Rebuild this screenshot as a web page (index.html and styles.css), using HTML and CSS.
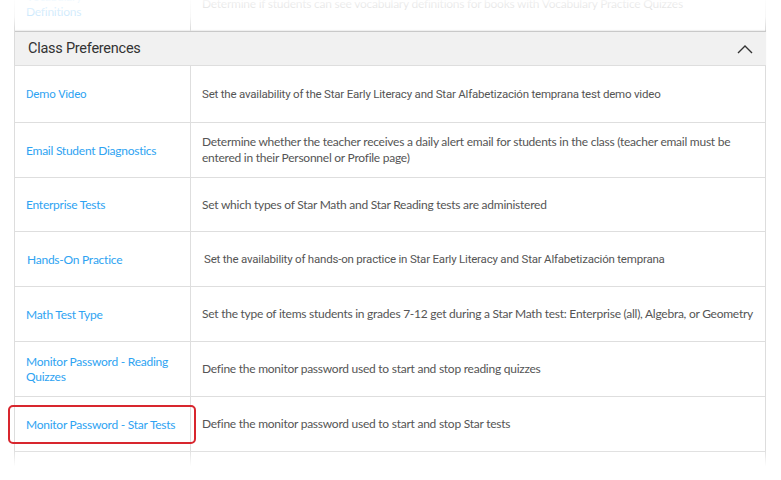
FILE: index.html
```
<!DOCTYPE html>
<html>
<head>
    <meta charset="UTF-8">
    <title>Class Preferences</title>
    <link rel="stylesheet" href="styles.css">
</head>
<body>
<div class="page">
    <div class="prefTable">
        <div class="row">
            <div class="name"><a href="#">Vocabulary<br>Definitions</a></div>
            <div class="desc">Determine if students can see vocabulary definitions for books with Vocabulary Practice Quizzes</div>
        </div>

        <div class="groupHead">
            <span>Class Preferences</span>
            <svg class="chev" width="16" height="10" viewBox="0 0 16 10"><polyline points="1,9 8,2 15,9" fill="none" stroke="#333" stroke-width="1.4"/></svg>
        </div>

        <div class="row tall">
            <div class="name roboto"><a href="#">Demo Video</a></div>
            <div class="desc roboto">Set the availability of the Star Early Literacy and Star Alfabetización temprana test demo video</div>
        </div>
        <div class="row">
            <div class="name"><a href="#">Email Student Diagnostics</a></div>
            <div class="desc">Determine whether the teacher receives a daily alert email for students in the class (teacher email must be entered in their Personnel or Profile page)</div>
        </div>
        <div class="row short">
            <div class="name"><a href="#">Enterprise Tests</a></div>
            <div class="desc">Set which types of Star Math and Star Reading tests are administered</div>
        </div>
        <div class="row">
            <div class="name shift"><a href="#">Hands-On Practice</a></div>
            <div class="desc roboto shift">Set the availability of hands-on practice in Star Early Literacy and Star Alfabetización temprana</div>
        </div>
        <div class="row">
            <div class="name"><a href="#">Math Test Type</a></div>
            <div class="desc">Set the type of items students in grades 7-12 get during a Star Math test: Enterprise (all), Algebra, or Geometry</div>
        </div>
        <div class="row">
            <div class="name"><a href="#">Monitor Password - Reading Quizzes</a></div>
            <div class="desc">Define the monitor password used to start and stop reading quizzes</div>
        </div>
        <div class="row">
            <div class="name marked"><a href="#">Monitor Password - Star Tests</a></div>
            <div class="desc">Define the monitor password used to start and stop Star tests</div>
        </div>
        <div class="row">
            <div class="name"></div>
            <div class="desc"></div>
        </div>
    </div>
</div>
</body>
</html>
```

FILE: styles.css
```
* {
    margin: 0;
    padding: 0;
    box-sizing: border-box;
}

body {
    background: #fff;
    font-family: "Lato", "Noto Sans", sans-serif;
    font-size: 12px;
    letter-spacing: -0.25px;
    color: #555;
    overflow: hidden;
}

.page {
    position: relative;
    height: 480px;
    overflow: hidden;
}

.page:before,
.page:after {
    content: "";
    position: absolute;
    left: 0;
    right: 0;
    z-index: 2;
    pointer-events: none;
}

.page:before {
    top: 0;
    height: 28px;
    background: linear-gradient(rgba(255, 255, 255, 0.94), rgba(255, 255, 255, 0.75) 60%, rgba(255, 255, 255, 0));
}

.page:after {
    bottom: 0;
    height: 30px;
    background: linear-gradient(rgba(255, 255, 255, 0), #fff 55%);
}

.prefTable {
    width: 752px;
    margin: -23px 0 0 14px;
    border-left: 1px solid #ddd;
    border-right: 1px solid #ddd;
}

.row {
    display: flex;
    min-height: 55px;
    border-bottom: 1px solid #dedede;
}

.row.tall {
    min-height: 57px;
}

.row.short {
    min-height: 54px;
}

.name {
    display: flex;
    align-items: center;
    width: 176px;
    padding: 0 10px 0 11px;
    border-right: 1px solid #dedede;
    line-height: 15px;
}

.name a {
    color: #2ea3f2;
    text-decoration: none;
}

.desc {
    display: flex;
    align-items: center;
    flex: 1;
    padding: 0 4px 0 11px;
    line-height: 16px;
}

.roboto {
    font-family: "Roboto", sans-serif;
    font-size: 11.5px;
    letter-spacing: -0.2px;
}

.shift {
    padding-left: 12px;
}

.desc.shift {
    padding-left: 13px;
}

.marked {
    position: relative;
}

.marked:after {
    content: "";
    position: absolute;
    left: -7px;
    top: 8px;
    width: 184px;
    height: 35px;
    border: 2px solid #d8262e;
    border-radius: 5px;
}

.groupHead {
    display: flex;
    align-items: center;
    justify-content: space-between;
    height: 35px;
    margin: -1px -1px 0 0;
    padding: 0 13px 0 13px;
    background: #f1f1f1;
    border-top: 1px solid #c9c9c9;
    border-bottom: 1px solid #dedede;
    box-shadow: 0 -1px 1px rgba(0, 0, 0, 0.06);
    font-family: "Roboto", sans-serif;
    font-size: 14.5px;
    color: #333;
}

.chev {
    display: block;
}
```
